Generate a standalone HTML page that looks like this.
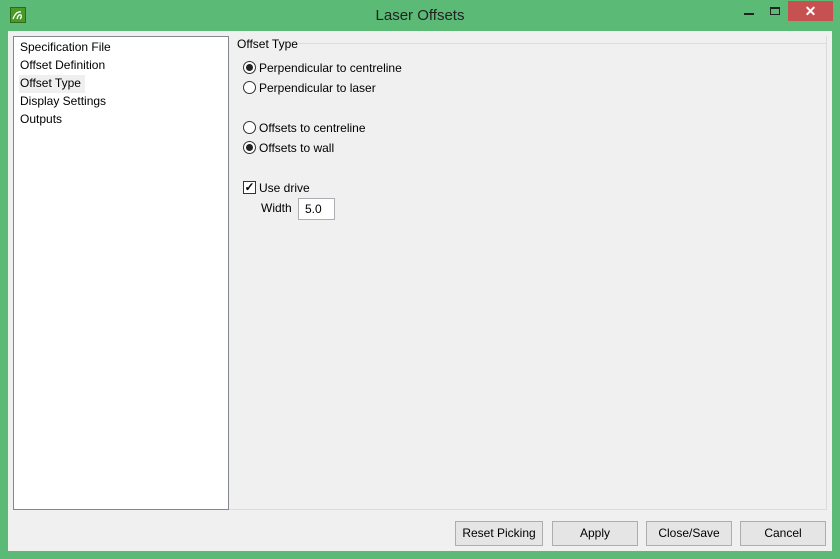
<!DOCTYPE html>
<html><head><style>
*{margin:0;padding:0;box-sizing:border-box}
body{width:840px;height:559px;background:#5aba76;font-family:"Liberation Sans",sans-serif;font-size:12px;color:#000;position:relative;overflow:hidden}
.abs{position:absolute}
#title{left:0;top:7px;width:840px;text-align:center;font-size:15px;color:#222}
#client{left:8px;top:31px;width:824px;height:520px;background:#f0f0f0}
#list{left:13px;top:36px;width:216px;height:474px;background:#fff;border:1px solid #828790}
.li{position:absolute;left:6px;font-size:12px}
#panel{left:229px;top:36px;width:598px;height:474px;border-right:1px solid #dcdcdc;border-bottom:1px solid #dcdcdc}
.radio{position:absolute;width:13px;height:13px;border:1px solid #333;border-radius:50%;background:#fff}
.radio.on::after{content:"";position:absolute;left:2px;top:2px;width:7px;height:7px;border-radius:50%;background:#222}
.lbl{position:absolute;font-size:12px}
.btn{position:absolute;top:521px;height:25px;border:1px solid #adadad;background:#e5e5e5;text-align:center;line-height:23px;font-size:12px}
</style></head><body>
<div class="abs" style="left:10px;top:7px;width:16px;height:16px;background:#4a9a2a;border:1px solid #2f6a18">
<svg width="14" height="14" viewBox="0 0 14 14"><path d="M2 11 Q5 3 10 4 M6 11 Q7 6 10 7 Q11 9 9 11" stroke="#fff" stroke-width="1.3" fill="none"/></svg></div>
<div id="title" class="abs">Laser Offsets</div>
<div class="abs" style="left:744px;top:13px;width:10px;height:2px;background:#222"></div>
<div class="abs" style="left:770px;top:7px;width:10px;height:8px;border:1px solid #222;border-top-width:2px"></div>
<div class="abs" style="left:788px;top:1px;width:45px;height:20px;background:#c75050;color:#fff;text-align:center;font-size:14px;line-height:20px;font-weight:bold">✕</div>
<div id="client" class="abs"></div>
<div id="list" class="abs">
<div class="li" style="top:3px">Specification File</div>
<div class="li" style="top:21px">Offset Definition</div>
<div class="li" style="top:38px;left:5px;width:66px;height:18px;background:#efefef"></div>
<div class="li" style="top:39px">Offset Type</div>
<div class="li" style="top:57px">Display Settings</div>
<div class="li" style="top:75px">Outputs</div>
</div>
<div id="panel" class="abs"></div>
<div class="abs" style="left:299px;top:43px;width:527px;height:1px;background:#dcdcdc"></div>
<div class="lbl" style="left:237px;top:37px">Offset Type</div>
<div class="radio on" style="left:243px;top:61px"></div><div class="lbl" style="left:259px;top:61px">Perpendicular to centreline</div>
<div class="radio" style="left:243px;top:81px"></div><div class="lbl" style="left:259px;top:81px">Perpendicular to laser</div>
<div class="radio" style="left:243px;top:121px"></div><div class="lbl" style="left:259px;top:121px">Offsets to centreline</div>
<div class="radio on" style="left:243px;top:141px"></div><div class="lbl" style="left:259px;top:141px">Offsets to wall</div>
<div class="abs" style="left:243px;top:181px;width:13px;height:13px;border:1px solid #333;background:#fff;font-size:12px;line-height:11px;text-align:center;font-weight:bold">✓</div>
<div class="lbl" style="left:259px;top:181px">Use drive</div>
<div class="lbl" style="left:261px;top:201px">Width</div>
<div class="abs" style="left:298px;top:198px;width:37px;height:22px;border:1px solid #abadb3;background:#fff;padding-left:6px;line-height:20px">5.0</div>
<div class="btn" style="left:455px;width:88px">Reset Picking</div>
<div class="btn" style="left:552px;width:86px">Apply</div>
<div class="btn" style="left:646px;width:86px">Close/Save</div>
<div class="btn" style="left:740px;width:86px">Cancel</div>
</body></html>
